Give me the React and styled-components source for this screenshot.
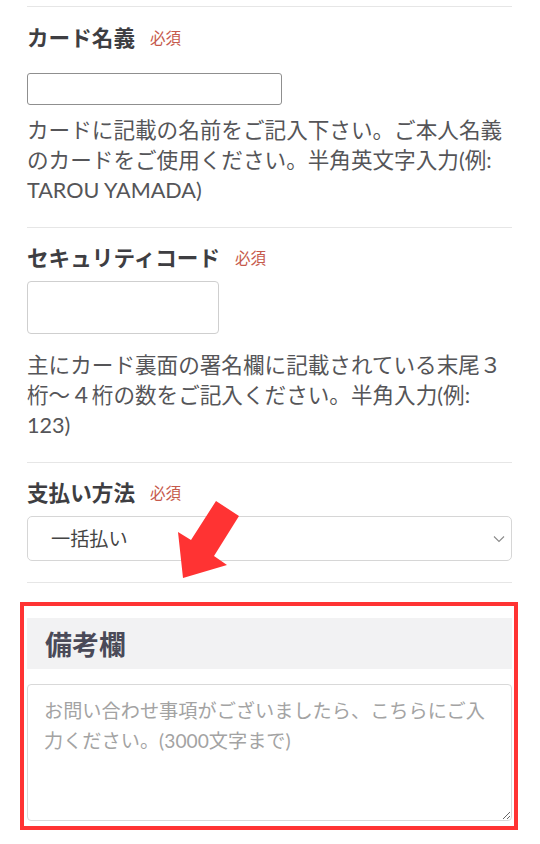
import React from "react";
import styled, { createGlobalStyle } from "styled-components";

const GlobalStyle = createGlobalStyle`
  body {
    margin: 0;
    background: #fff;
    font-family: Lato, "Noto Sans CJK JP", sans-serif;
  }
  * {
    box-sizing: border-box;
  }
`;

const Page = styled.div`
  position: relative;
  padding: 6px 28px 14px 27px;
`;

const Field = styled.section`
  border-top: 1px solid #e6e6e6;
  padding: ${(p) => p.$pt}px 0 ${(p) => p.$pb}px;
`;

const LabelRow = styled.div`
  display: flex;
  align-items: center;
  gap: 15px;
  height: 30px;
  margin-bottom: ${(p) => p.$gap}px;
`;

const LabelText = styled.span`
  font-size: 21.6px;
  font-weight: 700;
  color: #3e3e42;
  line-height: 30px;
`;

const Required = styled.span`
  font-size: 15.5px;
  color: #c65a4c;
  line-height: 30px;
`;

const TextInput = styled.input`
  display: block;
  width: ${(p) => p.$w}px;
  height: ${(p) => p.$h}px;
  border: 1px solid ${(p) => (p.$dark ? "#8f8f8f" : "#cfcfcf")};
  border-radius: ${(p) => (p.$dark ? 3 : 4)}px;
  background: #fff;
  margin-bottom: ${(p) => p.$gap}px;
  outline: none;
`;

const Help = styled.p`
  margin: 0;
  font-size: 21.6px;
  line-height: 30px;
  color: #555558;
`;

const SelectWrap = styled.div`
  position: relative;
`;

const Select = styled.select`
  appearance: none;
  display: block;
  width: 100%;
  height: 45px;
  border: 1px solid #d6d6d6;
  border-radius: 5px;
  padding: 0 0 0 23px;
  background: #fff;
  font-family: Lato, "Noto Sans CJK JP", sans-serif;
  font-size: 19.2px;
  color: #444;
  outline: none;
`;

const Chevron = styled.svg`
  position: absolute;
  right: 7px;
  top: 50%;
  transform: translateY(-50%);
  pointer-events: none;
`;

const Highlight = styled.div`
  margin: 19px -6px 0 -7px;
  border: 4px solid #ff3333;
  padding: 12px 2px 5px 3px;
`;

const RemarksHeader = styled.h2`
  margin: 0 0 15px;
  height: 51px;
  display: flex;
  align-items: center;
  padding-left: 18px;
  background: #f2f2f3;
  font-size: 27px;
  font-weight: 700;
  color: #4a4a58;
`;

const Remarks = styled.textarea`
  display: block;
  width: 100%;
  height: 137px;
  border: 1px solid #d9d9d9;
  border-radius: 4px;
  padding: 11px 16px;
  font-family: Lato, "Noto Sans CJK JP", sans-serif;
  font-size: 19.2px;
  line-height: 30px;
  color: #444;
  outline: none;
  &::placeholder {
    color: #a3a3a3;
  }
`;

const Arrow = styled.svg`
  position: absolute;
  left: 170px;
  top: 495px;
`;

export default function App() {
  return (
    <>
      <GlobalStyle />
      <Page>
        <Field $pt={16} $pb={22}>
          <LabelRow $gap={20}>
            <LabelText>カード名義</LabelText>
            <Required>必須</Required>
          </LabelRow>
          <TextInput $w={255} $h={32} $gap={10} $dark />
          <Help>
            カードに記載の名前をご記入下さい。ご本人名義のカードをご使用ください。半角英文字入力(例: TAROU YAMADA)
          </Help>
        </Field>

        <Field $pt={15} $pb={22}>
          <LabelRow $gap={8}>
            <LabelText>セキュリティコード</LabelText>
            <Required>必須</Required>
          </LabelRow>
          <TextInput $w={192} $h={53} $gap={16} />
          <Help>
            主にカード裏面の署名欄に記載されている末尾３桁〜４桁の数をご記入ください。半角入力(例: 123)
          </Help>
        </Field>

        <Field $pt={15} $pb={21}>
          <LabelRow $gap={8}>
            <LabelText>支払い方法</LabelText>
            <Required>必須</Required>
          </LabelRow>
          <SelectWrap>
            <Select defaultValue="1">
              <option value="1">一括払い</option>
            </Select>
            <Chevron width="12" height="8" viewBox="0 0 12 8">
              <polyline points="1,1.5 6,6.5 11,1.5" fill="none" stroke="#8a8a8a" strokeWidth="1.1" />
            </Chevron>
          </SelectWrap>
        </Field>
        <div style={{ borderTop: "1px solid #e6e6e6" }} />

        <Highlight>
          <RemarksHeader>備考欄</RemarksHeader>
          <Remarks placeholder="お問い合わせ事項がございましたら、こちらにご入力ください。(3000文字まで)" />
        </Highlight>

        <Arrow width="80" height="90" viewBox="0 0 80 90">
          <polygon points="46,6 69,21 44,61 57,70 13,83 8,37 21,45" fill="#ff3333" />
        </Arrow>
      </Page>
    </>
  );
}
